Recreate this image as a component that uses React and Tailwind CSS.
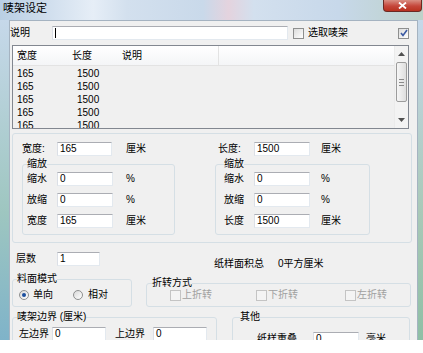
import React from "react";

const font = "font-['Liberation_Sans','Noto_Sans_CJK_SC',sans-serif]";

const Field = ({ value = "", w }) => (
  <div
    className={`h-[14px] shrink-0 bg-white border border-[#e3e9ef] border-t-[#abadb3] border-l-[#dbdfe6] pl-[2px] text-[10px] leading-[12px] text-black ${w}`}
  >
    {value}
  </div>
);

const Check = ({ checked, disabled }) => (
  <div
    className={`w-[11px] h-[11px] shrink-0 border flex items-center justify-center ${
      disabled
        ? "border-[#c4c4c4] bg-[#f4f4f4]"
        : "border-[#8e8f8f] bg-[linear-gradient(135deg,#dcdcdc,#ffffff)]"
    }`}
  >
    {checked && (
      <svg width="8" height="8" viewBox="0 0 8 8">
        <path d="M1 4 L3 6.5 L7 1" stroke="#3b5aa3" strokeWidth="1.6" fill="none" />
      </svg>
    )}
  </div>
);

const Radio = ({ on }) => (
  <div className="w-[10px] h-[10px] shrink-0 rounded-full border border-[#8e8f8f] bg-[linear-gradient(135deg,#d8d8d8,#ffffff)] flex items-center justify-center">
    {on && <div className="w-[4px] h-[4px] rounded-full bg-[#1b4e9e]" />}
  </div>
);

const rows = ["165", "165", "165", "165", "165"];

export default function App() {
  return (
    <div className={`w-[423px] h-[353px] bg-white overflow-hidden text-black ${font}`}>
      <div className="h-[340px] flex flex-col bg-[linear-gradient(90deg,#b9cfe4_0%,#cddcec_10%,#e6eef7_22%,#d3e0ee_30%,#c9d9ea_48%,#e4d3de_54%,#d3e0ee_60%,#c7d8ea_80%,#bdd2c9_100%)]">
        {/* title bar */}
        <div className="h-[20px] shrink-0 flex items-start">
          <div className="ml-[3px] mt-[1px] text-[11px] leading-[14px]">唛架设定</div>
          <div className="ml-auto mr-[1px] w-[39px] h-[12px] rounded-b-[4px] border border-t-0 border-[#6b2a22] bg-[linear-gradient(180deg,#d98f83,#c5463a_55%,#b8321f)] flex items-center justify-center">
            <svg width="9" height="7" viewBox="0 0 9 7">
              <path d="M1 0.5 L8 6.5 M8 0.5 L1 6.5" stroke="#fff" strokeWidth="1.8" />
            </svg>
          </div>
        </div>

        <div className="flex flex-1 min-h-0">
          <div className="w-[9px] shrink-0 bg-[linear-gradient(180deg,#c6d8ea,#9ec6c0_60%,#7fb3c9)]" />

          {/* client area */}
          <div className="w-[409px] shrink-0 bg-[#f0f0f0] border-l border-t border-r border-[#a5b3c1] overflow-hidden flex flex-col text-[10px] leading-[14px]">
            {/* 说明 row */}
            <div className="mt-[5px] h-[14px] flex items-center">
              <div className="w-[42px] shrink-0">说明</div>
              <div className="w-[236px] h-[14px] bg-white border border-[#e3e9ef] border-t-[#abadb3] border-l-[#dbdfe6] flex items-center pl-[2px]">
                <div className="w-px h-[10px] bg-black" />
              </div>
              <div className="ml-[5px]">
                <Check />
              </div>
              <div className="ml-[4px]">选取唛架</div>
              <div className="ml-auto mr-[8px]">
                <Check checked />
              </div>
            </div>

            {/* list view */}
            <div className="ml-[2px] mt-[5px] w-[397px] h-[84px] shrink-0 border border-[#828790] bg-[#f0f0f0] flex overflow-hidden">
              <div className="flex-1 flex flex-col">
                <div className="h-[20px] shrink-0 flex bg-[linear-gradient(180deg,#ffffff,#f4f5f7)] border-b border-[#e3e3e3]">
                  <div className="w-[55px] pl-[4px] flex items-center">宽度</div>
                  <div className="w-[50px] pl-[4px] flex items-center">长度</div>
                  <div className="w-[101px] pl-[4px] flex items-center border-r border-[#e3e3e3]">说明</div>
                </div>
                <div className="pt-[1px] flex flex-col">
                  {rows.map((r, i) => (
                    <div key={i} className="h-[13px] flex leading-[13px]">
                      <div className="w-[55px] pl-[4px]">{r}</div>
                      <div className="w-[50px] pl-[9px]">1500</div>
                    </div>
                  ))}
                </div>
              </div>
              <div className="w-[14px] shrink-0 flex flex-col bg-[#f3f3f3] border-l border-[#ebebeb]">
                <div className="h-[16px] flex items-center justify-center">
                  <svg width="7" height="4" viewBox="0 0 7 4">
                    <path d="M0 4 L3.5 0 L7 4 Z" fill="#505050" />
                  </svg>
                </div>
                <div className="mx-[1px] h-[40px] rounded-[2px] border border-[#9c9c9c] bg-[linear-gradient(90deg,#f6f6f6,#dedede)] flex flex-col items-center justify-center gap-[2px]">
                  <div className="w-[5px] h-px bg-[#8a8a8a]" />
                  <div className="w-[5px] h-px bg-[#8a8a8a]" />
                  <div className="w-[5px] h-px bg-[#8a8a8a]" />
                </div>
                <div className="flex-1" />
                <div className="h-[16px] flex items-center justify-center">
                  <svg width="7" height="4" viewBox="0 0 7 4">
                    <path d="M0 0 L3.5 4 L7 0 Z" fill="#505050" />
                  </svg>
                </div>
              </div>
            </div>

            {/* size group */}
            <div className="ml-[2px] mt-[4px] w-[400px] shrink-0 border border-[#d5dfe5] rounded-[3px] pt-[8px] pb-[7px] pl-[9px] flex">
              <div className="w-[193px] shrink-0 flex flex-col">
                <div className="h-[14px] flex items-center">
                  <div className="w-[35px] shrink-0">宽度:</div>
                  <Field value="165" w="w-[55px]" />
                  <div className="ml-[14px]">厘米</div>
                </div>
                <fieldset className="mt-[1px] w-[153px] border border-[#d5dfe5] rounded-[3px] pl-[4px] pb-[6px]">
                  <legend className="leading-[14px]">缩放</legend>
                  <div className="mt-[1px] flex flex-col gap-[7px]">
                    {[
                      ["缩水", "0", "%"],
                      ["放缩", "0", "%"],
                      ["宽度", "165", "厘米"],
                    ].map(([l, v, u]) => (
                      <div key={l} className="h-[14px] flex items-center">
                        <div className="w-[30px] shrink-0">{l}</div>
                        <Field value={v} w="w-[56px]" />
                        <div className="ml-[13px]">{u}</div>
                      </div>
                    ))}
                  </div>
                </fieldset>
              </div>
              <div className="flex flex-col">
                <div className="h-[14px] flex items-center pl-[3px]">
                  <div className="w-[36px] shrink-0">长度:</div>
                  <Field value="1500" w="w-[56px]" />
                  <div className="ml-[11px]">厘米</div>
                </div>
                <fieldset className="mt-[1px] w-[155px] border border-[#d5dfe5] rounded-[3px] pl-[8px] pb-[6px]">
                  <legend className="leading-[14px]">缩放</legend>
                  <div className="mt-[1px] flex flex-col gap-[7px]">
                    {[
                      ["缩水", "0", "%"],
                      ["放缩", "0", "%"],
                      ["长度", "1500", "厘米"],
                    ].map(([l, v, u]) => (
                      <div key={l} className="h-[14px] flex items-center">
                        <div className="w-[30px] shrink-0">{l}</div>
                        <Field value={v} w="w-[56px]" />
                        <div className="ml-[11px]">{u}</div>
                      </div>
                    ))}
                  </div>
                </fieldset>
              </div>
            </div>

            {/* 层数 row */}
            <div className="mt-[9px] h-[14px] shrink-0 flex items-start">
              <div className="ml-[6px] w-[41px] shrink-0">层数</div>
              <Field value="1" w="w-[43px]" />
              <div className="ml-[114px] mt-[5px]">纸样面积总</div>
              <div className="ml-[14px] mt-[5px]">0平方厘米</div>
            </div>

            {/* mode groups */}
            <div className="mt-[7px] flex items-start shrink-0">
              <fieldset className="ml-[2px] w-[120px] border border-[#d5dfe5] rounded-[3px] pl-[4px] pb-[5px]">
                <legend className="leading-[12px]">料面模式</legend>
                <div className="mt-[4px] h-[12px] flex items-center">
                  <div className="ml-[2px]">
                    <Radio on />
                  </div>
                  <div className="ml-[4px]">单向</div>
                  <div className="ml-[20px]">
                    <Radio />
                  </div>
                  <div className="ml-[5px]">相对</div>
                </div>
              </fieldset>
              <fieldset className="ml-[14px] mt-[4px] w-[265px] border border-[#d5dfe5] rounded-[3px] pl-[5px] pb-[5px]">
                <legend className="leading-[12px]">折转方式</legend>
                <div className="h-[12px] flex items-center text-[#a0a0a0]">
                  <div className="ml-[18px]">
                    <Check disabled />
                  </div>
                  <div className="ml-[1px]">上折转</div>
                  <div className="ml-[44px]">
                    <Check disabled />
                  </div>
                  <div className="ml-[1px]">下折转</div>
                  <div className="ml-[47px]">
                    <Check disabled />
                  </div>
                  <div className="ml-[1px]">左折转</div>
                </div>
              </fieldset>
            </div>

            {/* border / other groups */}
            <div className="mt-[4px] flex items-start shrink-0">
              <fieldset className="ml-[2px] w-[205px] border border-[#d5dfe5] rounded-[3px] pl-[4px] pb-[5px]">
                <legend className="leading-[12px]">唛架边界 (厘米)</legend>
                <div className="mt-[4px] h-[14px] flex items-center">
                  <div className="ml-[2px] w-[33px] shrink-0">左边界</div>
                  <Field value="0" w="w-[54px]" />
                  <div className="ml-[9px] w-[38px] shrink-0">上边界</div>
                  <Field value="0" w="w-[54px]" />
                </div>
              </fieldset>
              <fieldset className="ml-[15px] w-[178px] border border-[#d5dfe5] rounded-[3px] pl-[7px] pb-[5px]">
                <legend className="leading-[12px]">其他</legend>
                <div className="mt-[9px] h-[14px] flex items-center">
                  <div className="ml-[17px] w-[56px] shrink-0">纸样重叠</div>
                  <Field value="0" w="w-[46px]" />
                  <div className="ml-[7px]">毫米</div>
                </div>
              </fieldset>
            </div>
          </div>

          <div className="flex-1 bg-[linear-gradient(180deg,#c6d8ea,#a9c9b8_60%,#8fbfa5)]" />
        </div>
      </div>
    </div>
  );
}
